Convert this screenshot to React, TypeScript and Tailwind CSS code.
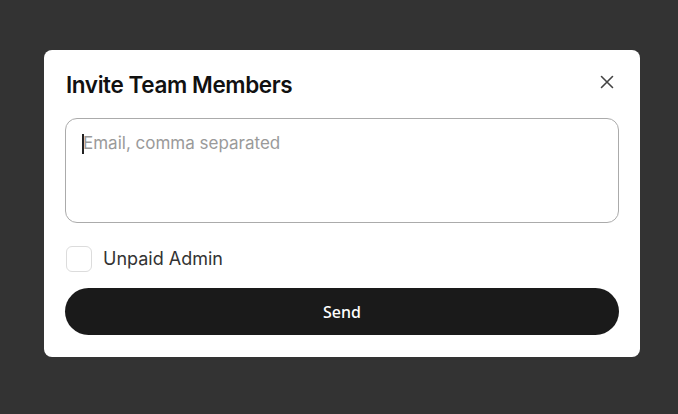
import React from "react";

export default function App() {
  return (
    <div className="w-[678px] h-[414px] bg-[#333333] flex items-start justify-start pl-[44px] pt-[50px]" style={{ fontFamily: "Inter, 'Noto Sans', sans-serif" }}>
      <div className="w-[596px] bg-white rounded-[8px] px-[21px] pt-[20px] pb-[22px] flex flex-col">
        <div className="flex items-center justify-between h-[30px]">
          <h1 className="text-[22.5px] font-semibold text-[#111] tracking-[-0.4px] pl-[1px]">Invite Team Members</h1>
          <button className="w-[20px] h-[20px] flex items-center justify-center mr-[2px] -mt-[6px] text-[#444]">
            <svg width="14" height="14" viewBox="0 0 14 14" fill="none" stroke="currentColor" strokeWidth="1.6" strokeLinecap="round">
              <path d="M1.5 1.5L12.5 12.5M12.5 1.5L1.5 12.5" />
            </svg>
          </button>
        </div>
        <div className="mt-[18px] h-[105px] w-full rounded-[12px] border border-[#ababab] px-[16px] pt-[12px] relative">
          <div className="flex items-center">
            <span className="w-[2px] h-[20px] bg-[#222] -mr-[1px]"></span>
            <span className="text-[17px] text-[#9a9a9a]">Email, comma separated</span>
          </div>
        </div>
        <label className="flex items-center mt-[22px] ml-[1px]">
          <span className="w-[26px] h-[26px] rounded-[6px] border border-[#dcdcdc] bg-white"></span>
          <span className="ml-[11px] text-[18px] text-[#333]">Unpaid Admin</span>
        </label>
        <button className="mt-[16px] h-[47px] w-full rounded-full bg-[#1a1a1a] text-white text-[16px] font-medium" style={{ fontFamily: "'Noto Sans', sans-serif" }}>
          Send
        </button>
      </div>
    </div>
  );
}
